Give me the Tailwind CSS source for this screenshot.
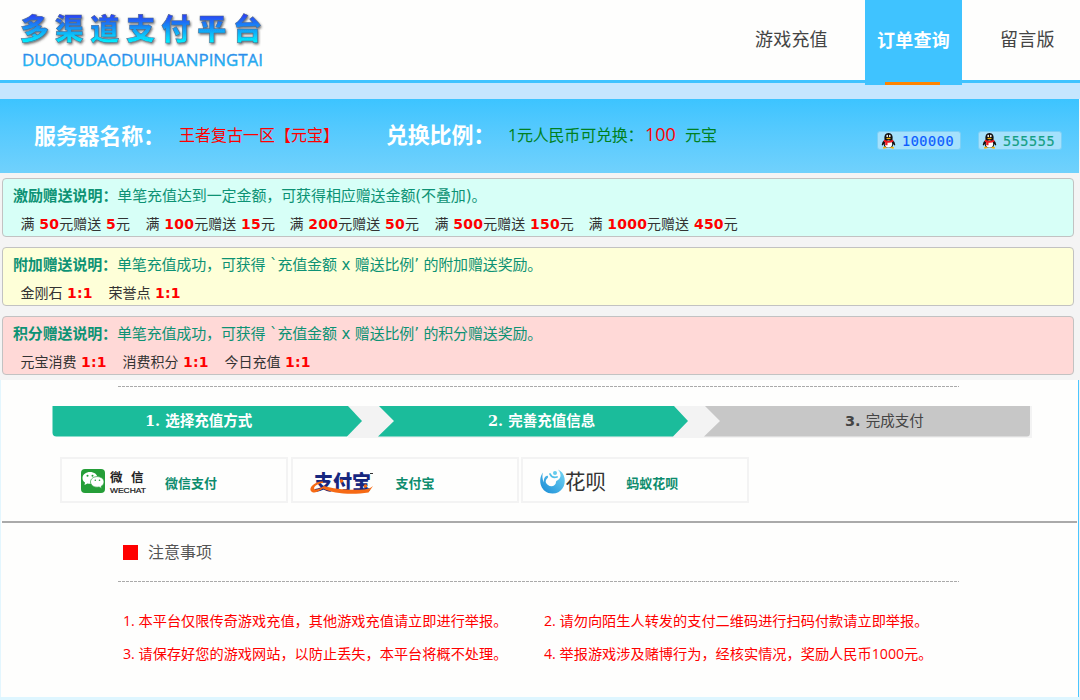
<!DOCTYPE html>
<html lang="zh-CN">
<head>
<meta charset="utf-8">
<title>多渠道支付平台</title>
<script src="https://cdn.jsdelivr.net/npm/@tailwindcss/browser@4"></script>
</head>
<body class="w-[1080px] h-[700px] overflow-hidden bg-[#f4f4f4] font-['Open_Sans','Noto_Sans_CJK_SC',sans-serif] whitespace-nowrap">
<header class="h-[83px] flex justify-between bg-[#fefefd] border-b-3 border-[#3fc3ff]">
  <svg class="block shrink-0" width="300" height="80" viewBox="0 0 300 80">
    <defs>
      <linearGradient id="title" x1="0" y1="14" x2="0" y2="43" gradientUnits="userSpaceOnUse"><stop offset="0" stop-color="#2f3cf5"/><stop offset=".45" stop-color="#168ef5"/><stop offset="1" stop-color="#00f6ff"/></linearGradient>
      <linearGradient id="sub" x1="0" y1="53" x2="0" y2="67" gradientUnits="userSpaceOnUse"><stop offset="0" stop-color="#2f78ee"/><stop offset="1" stop-color="#16cdfa"/></linearGradient>
      <filter id="shade" x="-10%" y="-20%" width="120%" height="150%"><feDropShadow dx="1" dy="1.5" stdDeviation="1" flood-color="#333" flood-opacity=".7"/></filter>
    </defs>
    <text x="20 54.700 90.200 126.200 161.300 197.300 233" y="40" font-family="Noto Sans CJK SC" font-weight="900" font-size="29" fill="url(#title)" stroke="#4b6688" stroke-width=".5" filter="url(#shade)">多渠道支付平台</text>
    <text x="22" y="66" textLength="241" lengthAdjust="spacingAndGlyphs" font-family="Open Sans" font-size="17" fill="url(#sub)" stroke="#2fa0e8" stroke-width=".4">DUOQUDAODUIHUANPINGTAI</text>
  </svg>
  <nav class="flex h-20 text-[18px] leading-[78px] text-[#444]">
    <a class="w-[110px] tracking-[.2px]">游戏充值</a>
    <a class="relative z-10 w-[97px] h-[85px] bg-[#3fc3ff] text-center text-white font-bold tracking-[.3px] leading-[80px]">订单查询<i class="absolute left-5 bottom-0 w-[55px] h-[3px] bg-[#ff8400]"></i></a>
    <a class="w-[118px] pl-[38px] tracking-[.2px]">留言版</a>
  </nav>
</header>
<div class="h-4 bg-[#c5e6fe]"></div>
<section class="flex w-[1079px] h-[74px] pl-[34px] bg-linear-to-b from-[#3cc4ff] to-[#70d1fc]">
  <b class="w-[145px] text-[22px] leading-[72px] text-white font-bold tracking-[-.2px]">服务器名称：</b>
  <span class="w-[207px] text-[16px] leading-[73px] text-[#f00]">王者复古一区【元宝】</span>
  <b class="w-[122px] text-[22px] leading-[70px] text-white font-bold tracking-[-.2px]">兑换比例：</b>
  <span class="w-[137px] text-[16px] leading-[73px] text-[#008020] tracking-[-.2px]">1元人民币可兑换：</span>
  <span class="w-10 text-[18px] leading-[71px] text-[#f00]">100</span>
  <span class="w-[192px] text-[16px] leading-[73px] text-[#008020]">元宝</span>
  <div class="flex gap-[17px] pt-[32px] font-['DejaVu_Sans_Mono',monospace] text-[13.5px]">
    <div class="flex w-[84px] h-[19px] rounded-[3px] border border-[#7dd0f6] bg-[#a5e1fc] pl-[3px] gap-[6px]">
      <svg width="15" height="17" viewBox="0 0 15 17"><path d="M3.500 8Q2.500 1 7.500 1t4 7q3 2 2.800 5l-1 .6-1-1.600q-.4 2.800-1.500 3.500H4.200Q3 14.800 2.700 12l-1 1.600L.7 13Q.5 10 3.500 8" fill="#111"/><ellipse cx="7.500" cy="12" rx="3.700" ry="3.600" fill="#fff"/><ellipse cx="6.200" cy="4" rx=".8" ry="1.200" fill="#fff"/><ellipse cx="8.800" cy="4" rx=".8" ry="1.200" fill="#fff"/><path d="M4.800 6.300q2.700-1 5.400 0-2.700 2-5.400 0M2 15.200q2-1 4 .8l-3.500.8zM9 16q2-1.800 4-.8l-.5 1.600z" fill="#f7b500"/><path d="M3 7.800q4.500 2.200 9 0l.5 1.700q-3 1.500-6 1.200v2.500H4.200v-2.800l-1.500-.8z" fill="#ed1c24"/></svg>
      <span class="leading-[19px] text-[#0b5bff] [-webkit-text-stroke:.2px_#0b5bff] tracking-[.55px]">100000</span>
    </div>
    <div class="flex w-[84px] h-[19px] rounded-[3px] border border-[#7dd0f6] bg-[#a5e1fc] pl-[3px] gap-[6px]">
      <svg width="15" height="17" viewBox="0 0 15 17"><path d="M3.500 8Q2.500 1 7.500 1t4 7q3 2 2.800 5l-1 .6-1-1.600q-.4 2.800-1.500 3.500H4.200Q3 14.800 2.700 12l-1 1.600L.7 13Q.5 10 3.500 8" fill="#111"/><ellipse cx="7.500" cy="12" rx="3.700" ry="3.600" fill="#fff"/><ellipse cx="6.200" cy="4" rx=".8" ry="1.200" fill="#fff"/><ellipse cx="8.800" cy="4" rx=".8" ry="1.200" fill="#fff"/><path d="M4.800 6.300q2.700-1 5.400 0-2.700 2-5.400 0M2 15.200q2-1 4 .8l-3.500.8zM9 16q2-1.800 4-.8l-.5 1.600z" fill="#f7b500"/><path d="M3 7.800q4.500 2.200 9 0l.5 1.700q-3 1.500-6 1.200v2.500H4.200v-2.800l-1.500-.8z" fill="#ed1c24"/></svg>
      <span class="leading-[19px] text-[#159f85] [-webkit-text-stroke:.2px_#159f85] tracking-[.55px]">555555</span>
    </div>
  </div>
</section>
<section class="h-[207px] pt-[5px] pl-[2px] flex flex-col gap-[10px] text-[#333] font-['DejaVu_Sans','Noto_Sans_CJK_SC',sans-serif]">
  <div class="w-[1072px] h-[59px] rounded border border-[#c2c2c2] bg-[#d7fff7] pl-[10px]">
    <p class="h-[34px] leading-[35px] text-[15px] tracking-[-.1px] text-[#0d9274]"><b class="font-bold">激励赠送说明：</b>单笔充值达到一定金额，可获得相应赠送金额(不叠加)。</p>
    <div class="flex pl-[7.5px] text-[14px] leading-[22px] [&_b]:text-[#f00] [&_b]:tracking-[.2px] [&_b]:ml-[.4px]">
      <span class="w-[125px]">满 <b>50</b>元赠送 <b>5</b>元</span><span class="w-[144px]">满 <b>100</b>元赠送 <b>15</b>元</span><span class="w-[145px]">满 <b>200</b>元赠送 <b>50</b>元</span><span class="w-[154px]">满 <b>500</b>元赠送 <b>150</b>元</span><span>满 <b>1000</b>元赠送 <b>450</b>元</span>
    </div>
  </div>
  <div class="w-[1072px] h-[59px] rounded border border-[#c2c2c2] bg-[#feffd8] pl-[10px]">
    <p class="h-[34px] leading-[35px] text-[15px] tracking-[-.15px] text-[#0d9274]"><b class="font-bold">附加赠送说明：</b>单笔充值成功，可获得 `充值金额 x 赠送比例’ 的附加赠送奖励。</p>
    <div class="flex pl-[7.5px] text-[14px] leading-[22px] [&_b]:text-[#f00] [&_b]:tracking-[.2px]">
      <span class="w-[88px]">金刚石 <b>1:1</b></span><span>荣誉点 <b>1:1</b></span>
    </div>
  </div>
  <div class="w-[1072px] h-[59px] rounded border border-[#c2c2c2] bg-[#ffd9d7] pl-[10px]">
    <p class="h-[34px] leading-[35px] text-[15px] tracking-[-.15px] text-[#0d9274]"><b class="font-bold">积分赠送说明：</b>单笔充值成功，可获得 `充值金额 x 赠送比例’ 的积分赠送奖励。</p>
    <div class="flex pl-[7.5px] text-[14px] leading-[22px] [&_b]:text-[#f00] [&_b]:tracking-[.2px]">
      <span class="w-[102px]">元宝消费 <b>1:1</b></span><span class="w-[102px]">消费积分 <b>1:1</b></span><span>今日充值 <b>1:1</b></span>
    </div>
  </div>
</section>
<main class="w-[1079px] h-[317px] bg-[#fefefd] border-l border-l-[#e3f6fe] border-r border-r-[#4bc6ff]">
  <div class="pt-[6px] pl-[117px]"><div class="w-[841px] h-px bg-[repeating-linear-gradient(90deg,#aaa_0_3px,transparent_3px_4px)]"></div></div>
  <div class="pt-[19px] pl-[51px]">
    <div class="relative w-[980px] h-[31px]">
      <svg class="absolute inset-0" width="980" height="32" viewBox="0 0 980 32"><path d="M296 0h684v32H296z" fill="#f3f3f3"/><path d="M.5 0H296l14 15-15 15.500H4.500q-4 0-4-4z" fill="#1bbc9b"/><path d="M327 0h295l14 15-15 15.500H326L342 15z" fill="#1bbc9b"/><path d="M653 0h325v27q0 3.500-3 3.500H652L668 15z" fill="#c7c7c7"/></svg>
      <div class="relative flex text-[14.5px] leading-[29px] font-bold text-white font-['DejaVu_Serif','Noto_Sans_CJK_SC',sans-serif]">
        <span class="w-[342px] pl-[93px]">1. 选择充值方式</span>
        <span class="w-[357px] pl-[94px]">2. 完善充值信息</span>
        <span class="pl-[94px] text-[#444] leading-[30px] font-['DejaVu_Sans','Noto_Sans_CJK_SC',sans-serif]">3. <span class="font-normal">完成支付</span></span>
      </div>
    </div>
  </div>
  <div class="flex gap-[2.6px] pt-[20px] pl-[59px] h-[84px] text-[13px] text-[#0d8c6d] [&>div]:w-[228px] [&>div]:h-[46px] [&>div]:border-2 [&>div]:border-[#f3f3f3] [&>div]:flex [&_span]:font-bold">
    <div class="leading-[48px]">
      <svg class="shrink-0" width="103" height="42" viewBox="0 0 103 42"><rect x="19" y="10" width="24" height="24" rx="4" fill="#259e38"/><path d="M28 13c-4 0-7.500 2.500-7.500 6 0 2 1 3.500 2.500 4.500l-.5 2.500 3-1.500q1.500.4 3 .3c4.500-.3 7-3 7-6 0-3.500-3.500-5.800-7.500-5.800z" fill="#fff"/><path d="M35.300 17.600c-3.800 0-6.800 2.300-6.800 5.300s3 5.300 6.800 5.300l1.800-.2 2.600 1.500-.5-2.200c1.700-1 2.800-2.600 2.800-4.400 0-3-3-5.300-6.700-5.300z" fill="#fff" stroke="#259e38" stroke-width=".7"/><g fill="#259e38"><circle cx="25.500" cy="16.800" r="1"/><circle cx="30.500" cy="16.800" r="1"/><circle cx="33.300" cy="21.300" r=".8"/><circle cx="37.500" cy="21.300" r=".8"/></g><text x="48 69" y="22.500" font-size="12.500" font-weight="700" font-family="Noto Sans CJK SC" fill="#222">微信</text><text x="48" y="33.500" font-size="7.500" textLength="36" lengthAdjust="spacingAndGlyphs" font-family="Liberation Sans" fill="#111" stroke="#111" stroke-width=".2">WECHAT</text></svg><span>微信支付</span>
    </div>
    <div class="leading-[48px]">
      <svg class="shrink-0" width="103" height="42" viewBox="0 0 103 42"><text x="21" y="30.500" font-size="20" textLength="57" lengthAdjust="spacingAndGlyphs" font-weight="900" font-family="Noto Sans CJK SC" fill="#17277f">支付宝</text><path d="M30 22.500c-8-.5-16 7-11 10.500 4 2 8-2 11-3.500 10 5.500 30 6.500 45.500 4l4.500-6.500q-3 3-9 3.500c-14 1-31-.5-40-3.500q-6 4-9 3.500c-3-2 2-6 8-6.500z" fill="#f66a15"/><circle cx="48.500" cy="22" r="1.800" fill="#f66a15"/><circle cx="72.500" cy="27" r="1.800" fill="#f66a15"/><path d="M77 14.500h3" stroke="#333"/></svg><span>支付宝</span>
    </div>
    <div class="leading-[48px]">
      <svg class="shrink-0" width="103" height="42" viewBox="0 0 103 42"><defs><linearGradient id="swirl" x1="1" y1="0" x2="0" y2="1"><stop stop-color="#75d8f6"/><stop offset="1" stop-color="#1689d4"/></linearGradient></defs><path d="M20 13.500C14 21 18 34.500 29.500 34.500c9 0 13.500-8 12-15.500-.7-4-3-7-6.500-8.500 2.500 3 3.500 6.500 1.500 9-1.500 2-3.500 2-3.500 3.500 0 4-5 5.500-8 3-3.500-3-2.500-5 0-7.500.500-2-1-2.500-2.500-1-1.500 1.500-2 3.500-1.500 6-1.800-3.500-2-7-1-10z" fill="url(#swirl)"/><circle cx="32" cy="14" r="2" fill="#62cbed"/><path d="M27 15q2 4.500 7 3" fill="none" stroke="#50bfe8" stroke-width="1.800" stroke-linecap="round"/><text x="42" y="29.500" font-size="21" textLength="41" lengthAdjust="spacingAndGlyphs" font-family="Noto Sans CJK SC" fill="#333">花呗</text></svg><span>蚂蚁花呗</span>
    </div>
  </div>
  <div class="ml-px w-[1075px] h-[2px] bg-[#aaa]"></div>
  <div class="flex items-center h-[58px] pl-[122px] gap-[10px] text-[16px] text-[#555]"><i class="w-[15px] h-[15px] bg-[#f00]"></i><span>注意事项</span></div>
  <div class="pl-[117px]"><div class="w-[841px] h-px bg-[repeating-linear-gradient(90deg,#aaa_0_3px,transparent_3px_4px)]"></div></div>
  <div class="grid grid-cols-[421px_500px] pt-[22px] pl-[122px] text-[14.2px] leading-[33px] text-[#f00]">
    <p>1. 本平台仅限传奇游戏充值，其他游戏充值请立即进行举报。</p><p>2. 请勿向陌生人转发的支付二维码进行扫码付款请立即举报。</p>
    <p>3. 请保存好您的游戏网站，以防止丢失，本平台将概不处理。</p><p>4. 举报游戏涉及赌博行为，经核实情况，奖励人民币1000元。</p>
  </div>
</main>
<footer class="h-[3px] bg-[#def6ff]"></footer>
</body>
</html>
